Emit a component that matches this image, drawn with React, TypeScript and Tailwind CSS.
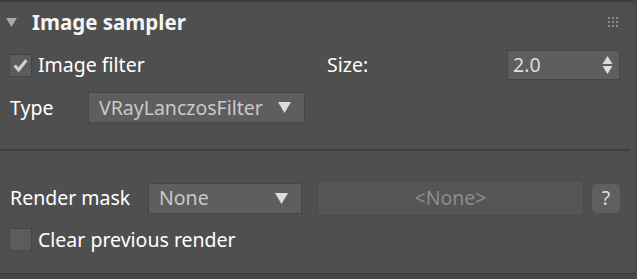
const Caret = ({ className = "" }: { className?: string }) => (
  <svg viewBox="0 0 12 10" className={className}>
    <path d="M0 0 H12 L6 10 Z" fill="currentColor" />
  </svg>
);

const Checkbox = ({ checked }: { checked?: boolean }) => (
  <div className="flex h-[23px] w-[23px] shrink-0 items-center justify-center border border-[#454545] bg-[#5c5c5c]">
    {checked && (
      <svg viewBox="0 0 16 16" className="h-[17px] w-[17px]">
        <path
          d="M2.5 8 L6.2 12 L13.5 3"
          fill="none"
          stroke="#d0d0d0"
          strokeWidth="3"
          strokeLinejoin="miter"
        />
      </svg>
    )}
  </div>
);

const Dropdown = ({ value, width }: { value: string; width: string }) => (
  <div
    className={`flex h-[31px] items-center justify-between border border-[#464646] bg-[#5e5e5e] pl-[10px] pr-[13px] text-[#c9c9c9] ${width}`}
  >
    <span>{value}</span>
    <Caret className="h-[11px] w-[13px] text-[#dcdcdc]" />
  </div>
);

export default function App() {
  return (
    <div className="h-[279px] w-[637px] bg-[#474747] font-['Noto_Sans',sans-serif] text-[19.5px] leading-none text-white">
      <div className="h-[274px] w-[635px] rounded-tr-[6px] border-t-2 border-b border-[#3b3b3b] bg-[#4f4f4f]">
        {/* Header */}
        <div className="flex h-[40px] items-center pl-[6px] pr-[17px]">
          <Caret className="h-[9px] w-[11px] text-[#a9a9a9]" />
          <span className="ml-[15px] text-[20.5px] font-bold text-[#f4f4f4]">
            Image sampler
          </span>
          <div className="ml-auto grid grid-cols-3 gap-[2px]">
            {Array.from({ length: 9 }).map((_, i) => (
              <div key={i} className="h-[2px] w-[2px] bg-[#8c8c8c]" />
            ))}
          </div>
        </div>

        {/* Image filter / Size */}
        <div className="mt-[8px] flex h-[30px] items-center pl-[9px]">
          <div className="flex w-[318px] items-center">
            <Checkbox checked />
            <span className="ml-[6px]">Image filter</span>
          </div>
          <span>Size:</span>
          <div className="ml-auto mr-[15px] flex h-[30px] w-[113px] items-center justify-between border border-[#474747] bg-[#5e5e5e] pl-[5px] pr-[6px] text-[#dcdcdc]">
            <span>2.0</span>
            <div className="flex flex-col gap-[2px] text-[#dcdcdc]">
              <svg viewBox="0 0 10 8" className="h-[8px] w-[11px]">
                <path d="M0 8 H10 L5 0 Z" fill="currentColor" />
              </svg>
              <svg viewBox="0 0 10 8" className="h-[8px] w-[11px]">
                <path d="M0 0 H10 L5 8 Z" fill="currentColor" />
              </svg>
            </div>
          </div>
        </div>

        {/* Type */}
        <div className="mt-[12px] flex h-[31px] items-center pl-[10px]">
          <span className="w-[78px]">Type</span>
          <Dropdown value="VRayLanczosFilter" width="w-[217px]" />
        </div>

        {/* Separator */}
        <div className="mt-[26px] h-[2px] w-[630px] bg-[#3e3e3e]" />

        {/* Render mask */}
        <div className="mt-[29px] flex h-[36px] items-center pl-[10px]">
          <span className="w-[138px]">Render mask</span>
          <Dropdown value="None" width="w-[154px]" />
          <div className="ml-[15px] flex h-[36px] w-[267px] items-center justify-center rounded-[5px] border border-[#4a4a4a] bg-[#555555] text-[#8c8c8c]">
            &lt;None&gt;
          </div>
          <div className="ml-[8px] flex h-[29px] w-[28px] items-center justify-center rounded-[5px] bg-[#5f5f5f] text-[#dedede]">
            ?
          </div>
        </div>

        {/* Clear previous render */}
        <div className="mt-[12px] flex h-[23px] items-center pl-[9px]">
          <Checkbox />
          <span className="ml-[6px]">Clear previous render</span>
        </div>
      </div>
    </div>
  );
}
